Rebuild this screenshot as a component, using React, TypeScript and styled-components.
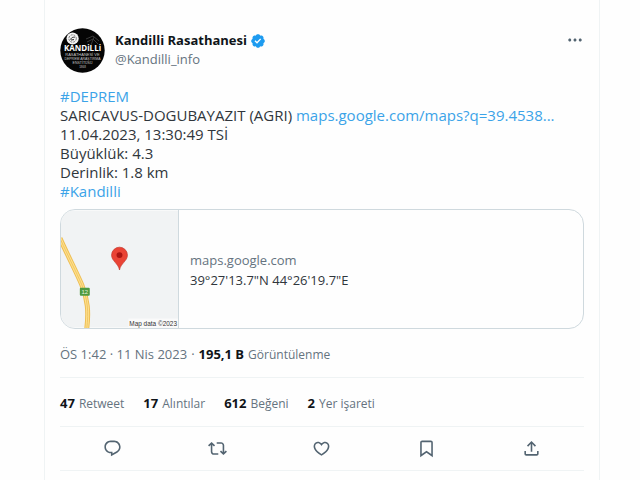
import React from "react";
import styled, { createGlobalStyle } from "styled-components";

const ink = "#0f1419";
const muted = "#65737f";
const blue = "#3ba3e8";
const hairline = "#eff3f4";
const edge = "#cfd9de";

const GlobalStyle = createGlobalStyle`
  *, *::before, *::after { box-sizing: border-box; }
  body {
    margin: 0;
    background: #fefefe;
    color: ${ink};
    font-family: "Open Sans", "Noto Sans", sans-serif;
  }
  a { text-decoration: none; }
`;

const Column = styled.main`
  margin: 0 40px 0 44px;
  padding: 28px 15px 0;
  min-height: 100vh;
  border: solid ${hairline};
  border-width: 0 1px;
`;

const Header = styled.header`
  display: flex;
  align-items: flex-start;
  gap: 10px;
`;

const Avatar = styled.svg`
  width: 45px;
  height: 45px;
  flex: none;
`;

const Author = styled.div`
  flex: 1;
  padding-top: 3px;
`;

const NameRow = styled.div`
  display: flex;
  align-items: center;
  gap: 3px;
`;

const Name = styled.a`
  color: ${ink};
  font-size: 13px;
  font-weight: 700;
  line-height: 19px;
`;

const Handle = styled.a`
  display: block;
  color: ${muted};
  font-size: 13px;
  line-height: 19px;
`;

const IconButton = styled.button`
  display: flex;
  padding: 2px;
  border: 0;
  background: none;
  color: #536471;
  cursor: pointer;
`;

const MoreButton = styled(IconButton)`
  padding: 3px 0;
`;

const Body = styled.div`
  margin-top: 14px;
  color: #30363c;
  font-size: 15px;
  line-height: 19px;
`;

const BodyLink = styled.a`
  color: ${blue};
`;

const Card = styled.a`
  display: flex;
  height: 120px;
  margin-top: 8px;
  overflow: hidden;
  border: 1px solid ${edge};
  border-radius: 15px;
`;

const MapTile = styled.svg`
  flex: none;
  width: 118px;
  height: 118px;
  border-right: 1px solid ${edge};
`;

const CardText = styled.div`
  display: flex;
  flex-direction: column;
  justify-content: center;
  padding: 2px 11px 0;
  font-size: 13px;
  line-height: 20px;
`;

const Domain = styled.span`
  color: ${muted};
`;

const Place = styled.span`
  color: #30363c;
`;

const Meta = styled.div`
  display: flex;
  align-items: baseline;
  gap: 4px;
  padding: 15px 0 12px;
  border-bottom: 1px solid ${hairline};
  color: ${muted};
  font-size: 13px;
  line-height: 20px;
`;

const Label = styled.span`
  font-size: 12px;
`;

const Strong = styled.strong`
  color: ${ink};
  font-size: 13px;
  font-weight: 700;
`;

const Stats = styled.div`
  display: flex;
  gap: 19px;
  padding: 15px 0 12px;
  border-bottom: 1px solid ${hairline};
`;

const Stat = styled.a`
  display: flex;
  align-items: baseline;
  gap: 4px;
  color: ${muted};
  line-height: 20px;
`;

const Actions = styled.div`
  display: flex;
  justify-content: space-around;
  padding: 10px 0;
  border-bottom: 1px solid ${hairline};
`;

const Glyph = ({ d, size = 19 }: { d: string; size?: number }) => (
  <svg width={size} height={size} viewBox="0 0 24 24" fill="currentColor" aria-hidden="true">
    <path d={d} />
  </svg>
);

const actions = [
  {
    label: "Yanıtla",
    d: "M1.751 10c0-4.42 3.584-8 8.005-8h4.366c4.49 0 8.129 3.64 8.129 8.13 0 2.96-1.607 5.68-4.196 7.11l-8.054 4.46v-3.69h-.067c-4.49.1-8.183-3.51-8.183-8.01zm8.005-6c-3.317 0-6.005 2.69-6.005 6 0 3.37 2.77 6.08 6.138 6.01l.351-.01h1.761v2.3l5.087-2.81c1.951-1.08 3.163-3.13 3.163-5.36 0-3.39-2.744-6.13-6.129-6.13H9.756z",
  },
  {
    label: "Retweetle",
    d: "M4.5 3.88l4.432 4.14-1.364 1.46L5.5 7.55V16c0 1.1.896 2 2 2H13v2H7.5c-2.209 0-4-1.79-4-4V7.55L1.432 9.48.068 8.02 4.5 3.88zM16.5 6H11V4h5.5c2.209 0 4 1.79 4 4v8.45l2.068-1.93 1.364 1.46-4.432 4.14-4.432-4.14 1.364-1.46 2.068 1.93V8c0-1.1-.896-2-2-2z",
  },
  {
    label: "Beğen",
    d: "M16.697 5.5c-1.222-.06-2.679.51-3.89 2.16l-.805 1.09-.806-1.09C9.984 6.01 8.526 5.44 7.304 5.5c-1.243.07-2.349.78-2.91 1.91-.552 1.12-.633 2.78.479 4.82 1.074 1.97 3.257 4.27 7.129 6.61 3.87-2.34 6.052-4.64 7.126-6.61 1.111-2.04 1.03-3.7.477-4.82-.561-1.13-1.666-1.84-2.908-1.91zm4.187 7.69c-1.351 2.48-4.001 5.12-8.379 7.67l-.503.3-.504-.3c-4.379-2.55-7.029-5.19-8.382-7.67-1.36-2.5-1.41-4.86-.514-6.67.887-1.79 2.647-2.91 4.601-3.01 1.651-.09 3.368.56 4.798 2.01 1.429-1.45 3.146-2.1 4.796-2.01 1.954.1 3.714 1.22 4.601 3.01.896 1.81.846 4.17-.514 6.67z",
  },
  {
    label: "Yer işareti ekle",
    d: "M4 4.5C4 3.12 5.119 2 6.5 2h11C18.881 2 20 3.12 20 4.5v18.44l-8-5.71-8 5.71V4.5zM6.5 4c-.276 0-.5.22-.5.5v14.56l6-4.29 6 4.29V4.5c0-.28-.224-.5-.5-.5h-11z",
  },
  {
    label: "Paylaş",
    d: "M12 2.59l5.7 5.7-1.41 1.42L13 6.41V16h-2V6.41l-3.3 3.3-1.41-1.42L12 2.59zM21 15l-.02 3.51c0 1.38-1.12 2.49-2.5 2.49H5.5C4.11 21 3 19.88 3 18.5V15h2v3.5c0 .28.22.5.5.5h12.98c.28 0 .5-.22.5-.5L19 15h2z",
  },
];

const stats = [
  ["47", "Retweet"],
  ["17", "Alıntılar"],
  ["612", "Beğeni"],
  ["2", "Yer işareti"],
];

const AvatarPicture = () => (
  <Avatar viewBox="0 0 45 45" role="img" aria-label="Kandilli Rasathanesi">
    <circle cx="22.5" cy="22.5" r="22.2" fill="#050505" />
    <circle cx="12.6" cy="10.5" r="6.1" fill="#f4f4f4" />
    <circle cx="12.6" cy="10.5" r="3.7" fill="none" stroke="#777" strokeWidth="1" strokeDasharray="2 1" />
    <path d="M10.5 11.5c1.5-3 3.5-2 4.5-2.500M11 12l3-.4" fill="none" stroke="#222" strokeWidth="1" />
    <path d="M26 11l7-3 6 5M27 14l6-3 5 5M31 17l3-8" fill="none" stroke="#393939" strokeWidth="1" />
    <text fill="#c4c4c4" textAnchor="middle" fontFamily="Liberation Sans, sans-serif" fontSize="4">
      <tspan x="22.5" y="23" fontFamily="Open Sans, sans-serif" fontSize="8" fontWeight="700" fill="#fff">KANDiLLi</tspan>
      <tspan x="22.5" y="28">RASATHANESİ VE</tspan>
      <tspan x="22.5" y="32" fontSize="3.5">DEPREM ARAŞTIRMA</tspan>
      <tspan x="22.5" y="36" fontSize="3.5">ENSTİTÜSÜ</tspan>
      <tspan x="22.5" y="40" fontSize="3">1868</tspan>
    </text>
  </Avatar>
);

const VerifiedBadge = () => (
  <svg width="16" height="16" viewBox="0 0 22 22" role="img" aria-label="Onaylanmış hesap">
    <path
      fill="#1d9bf0"
      d="M20.396 11c-.018-.646-.215-1.275-.57-1.816-.354-.54-.852-.972-1.438-1.246.223-.607.27-1.264.14-1.897-.131-.634-.437-1.218-.882-1.687-.47-.445-1.053-.75-1.687-.882-.633-.13-1.29-.083-1.897.14-.273-.587-.704-1.086-1.245-1.44S11.647 1.62 11 1.604c-.646.017-1.273.213-1.813.568s-.969.854-1.24 1.44c-.608-.223-1.267-.272-1.902-.14-.635.13-1.22.436-1.69.882-.445.47-.749 1.055-.878 1.688-.13.633-.08 1.29.144 1.896-.587.274-1.087.705-1.443 1.245-.356.54-.555 1.17-.574 1.817.02.647.218 1.276.574 1.817.356.54.856.972 1.443 1.245-.224.606-.274 1.263-.144 1.896.13.634.433 1.218.877 1.688.47.443 1.054.747 1.687.878.633.132 1.29.084 1.897-.136.274.586.705 1.084 1.246 1.439.54.354 1.17.551 1.816.569.647-.016 1.276-.213 1.817-.567s.972-.854 1.245-1.44c.604.239 1.266.296 1.903.164.636-.132 1.22-.447 1.68-.907.46-.46.776-1.044.908-1.681s.075-1.299-.165-1.903c.586-.274 1.084-.705 1.439-1.246.354-.54.551-1.17.569-1.816z"
    />
    <path fill="#fff" d="M9.662 14.85l-3.429-3.428 1.293-1.302 2.072 2.072 4.4-4.794 1.347 1.246z" />
  </svg>
);

const road = "M-1 28C8 48 15 61 21 75C27 90 28 102 26 119";

const MapPicture = () => (
  <MapTile viewBox="0 0 118 118" role="img" aria-label="Harita">
    <rect width="119" height="118" fill="#f1f3f4" />
    <path d={road} fill="none" stroke="#edbd55" strokeWidth="5" />
    <path d={road} fill="none" stroke="#ffe18a" strokeWidth="3" />
    <path d={road} fill="none" stroke="#eec468" strokeWidth="1" />
    <rect x="19" y="78" width="10" height="8" rx="1" fill="#4e9a3f" />
    <text x="24" y="84" fontSize="6" fill="#e6f2df" textAnchor="middle" fontFamily="Liberation Sans, sans-serif">12</text>
    <path d="M59 60C58 53.5 51 51 51 45a8 8 0 0 1 16 0C67 51 60 53.5 59 60z" fill="#ea4335" stroke="#c5352a" strokeWidth=".7" />
    <circle cx="59" cy="45" r="3" fill="#ab1512" />
    <rect x="68" y="109" width="51" height="9" fill="#fafafa" />
    <text x="117" y="116" fontSize="6.5" fill="#333" textAnchor="end" fontFamily="Liberation Sans, sans-serif">Map data ©2023</text>
  </MapTile>
);

export default function App() {
  return (
    <>
      <GlobalStyle />
      <Column>
        <article>
          <Header>
            <AvatarPicture />
            <Author>
              <NameRow>
                <Name href="#profile">Kandilli Rasathanesi</Name>
                <VerifiedBadge />
              </NameRow>
              <Handle href="#profile">@Kandilli_info</Handle>
            </Author>
            <MoreButton aria-label="Daha fazla">
              <Glyph
                size={18}
                d="M3 12c0-1.100.9-2 2-2s2 .9 2 2-.9 2-2 2-2-.9-2-2zm9 2c1.100 0 2-.9 2-2s-.9-2-2-2-2 .9-2 2 .9 2 2 2zm7 0c1.100 0 2-.9 2-2s-.9-2-2-2-2 .9-2 2 .9 2 2 2z"
              />
            </MoreButton>
          </Header>
          <Body>
            <div><BodyLink href="#deprem">#DEPREM</BodyLink></div>
            <div>
              SARICAVUS-DOGUBAYAZIT (AGRI) <BodyLink href="#map">maps.google.com/maps?q=39.4538...</BodyLink>
            </div>
            <div>11.04.2023, 13:30:49 TSİ</div>
            <div>Büyüklük: 4.3</div>
            <div>Derinlik: 1.8 km</div>
            <div><BodyLink href="#kandilli">#Kandilli</BodyLink></div>
          </Body>
          <Card href="#map">
            <MapPicture />
            <CardText>
              <Domain>maps.google.com</Domain>
              <Place>39°27'13.7"N 44°26'19.7"E</Place>
            </CardText>
          </Card>
          <Meta>
            <time>ÖS 1:42 · 11 Nis 2023</time>
            <span>·</span>
            <Strong>195,1 B</Strong>
            <Label>Görüntülenme</Label>
          </Meta>
          <Stats>
            {stats.map(([count, label]) => (
              <Stat key={label} href="#stats">
                <Strong>{count}</Strong>
                <Label>{label}</Label>
              </Stat>
            ))}
          </Stats>
          <Actions>
            {actions.map(({ label, d }) => (
              <IconButton key={label} aria-label={label}>
                <Glyph d={d} />
              </IconButton>
            ))}
          </Actions>
        </article>
      </Column>
    </>
  );
}
